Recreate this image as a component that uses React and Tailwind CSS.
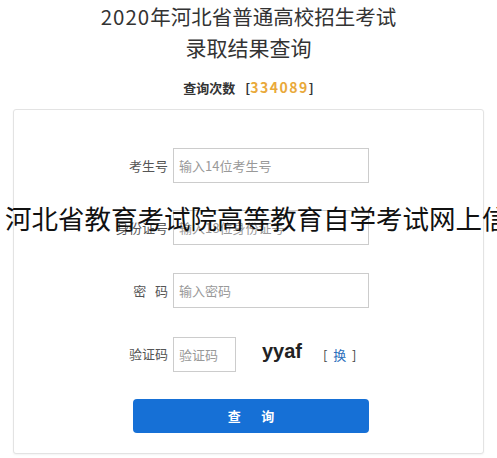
import React from 'react'

const cjk = { fontFamily: '"Noto Sans CJK SC", "Liberation Sans", sans-serif' }

const Row = ({ label, className = '', children }) => (
    <div className={`flex items-center ${className}`}>
        <div className="w-[159px] pr-[5px] text-right text-[13px] text-[#555]">
            {label}
        </div>
        {children}
    </div>
)

const Field = ({ placeholder, width = 'w-[196px]' }) => (
    <input
        type="text"
        placeholder={placeholder}
        className={`${width} h-[35px] border border-[#ccc] bg-white px-[5px] text-[13px] text-[#333] placeholder:text-[#999] outline-none`}
        style={cjk}
    />
)

export default function App() {
    return (
        <div className="relative w-[497px] h-[458px] overflow-hidden bg-white" style={cjk}>
            <div className="pt-[1px] text-center text-[#333]">
                <div className="text-[20.5px] leading-[31px]">
                    <span className="tracking-[1px]">2020</span>年河北省普通高校招生考试
                </div>
                <div className="text-[21px] leading-[31px]">录取结果查询</div>
            </div>

            <div className="mt-[14px] text-center text-[13px] leading-[20px] font-bold text-[#333]">
                查询次数<span className="ml-[10px]">[</span>
                <span className="text-[14px] tracking-[1.5px] text-[#e9a93a]">334089</span>]
            </div>

            <div className="mx-[13px] mt-[11px] h-[345px] rounded-[3px] border border-[#e3e3e3] bg-white pt-[38px] shadow-[0_1px_2px_rgba(0,0,0,0.05)]">
                <Row label="考生号">
                    <Field placeholder="输入14位考生号" />
                </Row>
                <Row label="身份证号" className="mt-[27px]">
                    <Field placeholder="输入18位身份证号" />
                </Row>
                <Row label={<span>密&nbsp;&nbsp;&nbsp;码</span>} className="mt-[28px]">
                    <Field placeholder="输入密码" />
                </Row>
                <Row label="验证码" className="mt-[28px]">
                    <Field placeholder="验证码" width="w-[63px]" />
                    <span
                        className="ml-[26px] mb-[6px] text-[20px] font-bold text-[#222]"
                        style={{ fontFamily: '"Liberation Sans", Arial, sans-serif' }}
                    >
                        yyaf
                    </span>
                    <span className="ml-[21px] mt-[2px] text-[13px] text-[#444]">
                        [&nbsp;&nbsp;<span className="text-[#2a6ebb]">换</span>&nbsp;&nbsp;]
                    </span>
                </Row>
                <button className="ml-[119px] mt-[27px] flex h-[34px] w-[236px] items-center justify-center rounded-[4px] bg-[#1670d6] text-[13px] font-bold text-white">
                    查&nbsp;&nbsp;&nbsp;&nbsp;&nbsp;&nbsp;&nbsp;询
                </button>
            </div>

            <div className="absolute left-[5px] top-[205px] whitespace-nowrap text-[26.5px] leading-none text-[#111]">
                河北省教育考试院高等教育自学考试网上信息
            </div>
        </div>
    )
}
